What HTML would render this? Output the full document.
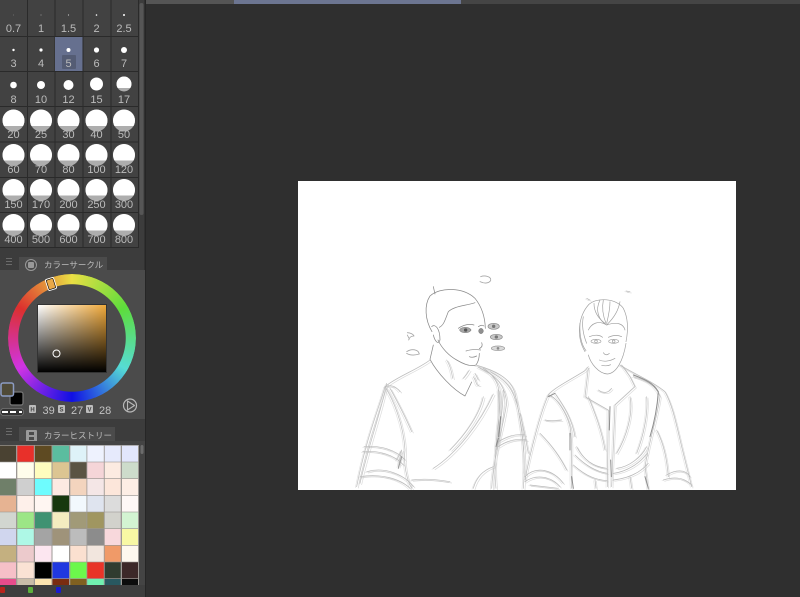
<!DOCTYPE html>
<html lang="ja">
<head>
<meta charset="utf-8">
<title>カラーサークル</title>
<style>
html,body{margin:0;padding:0;width:800px;height:597px;overflow:hidden;background:#2f2f2f}
#all{position:absolute;left:0;top:0;width:800px;height:597px;filter:blur(.35px)}
svg{position:absolute;left:0;top:0}
text{font-family:"Liberation Sans","Noto Sans CJK JP",sans-serif}
#wheel{position:absolute;left:7.5px;top:274px;width:128px;height:128px;border-radius:50%;
background:conic-gradient(#eadf44 0deg,#5ddc3c 60deg,#56dcd4 120deg,#1010e4 180deg,#d034e4 240deg,#dc302e 300deg,#eadf44 360deg);
-webkit-mask:radial-gradient(circle,transparent 53.5px,#000 54px);mask:radial-gradient(circle,transparent 53.5px,#000 54px)}
#sv{position:absolute;left:38px;top:305px;width:68px;height:67px;
background:linear-gradient(to bottom,transparent,#000),linear-gradient(to right,#fff,#f0a93a);box-shadow:0 0 0 1px #333}
</style>
</head>
<body>
<div id="all">
<svg width="800" height="597" viewBox="0 0 800 597" xmlns="http://www.w3.org/2000/svg">
<defs>
<clipPath id="w"><rect x="-12" y="-12" width="24" height="17.5"/></clipPath>
<clipPath id="w17"><rect x="115" y="75" width="18" height="13"/></clipPath>
<g id="big"><circle r="11" fill="#adadad"/><circle r="11" fill="#fff" clip-path="url(#w)"/></g>
</defs>
<rect width="800" height="597" fill="#2f2f2f"/>
<rect x="146" y="0" width="88" height="4" fill="#555"/>
<rect x="234" y="0" width="227" height="4" fill="#6c7591"/>
<rect x="461" y="0" width="339" height="4" fill="#454545"/>
<rect x="0" y="0" width="146" height="597" fill="#3c3c3c"/>
<rect x="144.500" y="0" width="1.500" height="597" fill="#262626"/>

<!-- brush grid -->
<rect x="0" y="0" width="139" height="248" fill="#424242"/>
<g fill="#2a2a2a">
<rect x="27" y="0" width="1" height="248"/><rect x="54.500" y="0" width="1" height="248"/><rect x="82.500" y="0" width="1" height="248"/><rect x="110.500" y="0" width="1" height="248"/><rect x="138" y="0" width="1" height="248"/>
<rect x="0" y="36" width="139" height="1"/><rect x="0" y="71" width="139" height="1"/><rect x="0" y="106" width="139" height="1"/><rect x="0" y="141.500" width="139" height="1"/><rect x="0" y="177" width="139" height="1"/><rect x="0" y="212" width="139" height="1"/><rect x="0" y="247" width="139" height="1"/>
</g>
<rect x="139.500" y="3" width="4" height="212" rx="2" fill="#565656"/>
<rect x="55" y="37" width="27.500" height="34" fill="#66708f"/>
<rect x="62" y="55" width="14" height="14" rx="1" fill="#545c74"/>
<g fill="#fff">
<circle cx="13.500" cy="15" r=".4" opacity=".5"/><circle cx="41" cy="15" r=".5" opacity=".6"/><circle cx="68.500" cy="15" r=".6" opacity=".7"/><circle cx="96.500" cy="15" r=".8"/><circle cx="124" cy="15" r="1"/>
<circle cx="13.500" cy="50" r="1.200"/><circle cx="41" cy="50" r="1.600"/><circle cx="68.500" cy="50" r="2"/><circle cx="96.500" cy="50" r="2.600"/><circle cx="124" cy="50" r="3"/>
<circle cx="13.500" cy="85" r="3.300"/><circle cx="41" cy="85" r="4"/><circle cx="68.500" cy="85" r="5"/>
<circle cx="96.500" cy="84" r="6.500"/>
</g>
<circle cx="124" cy="84" r="7.500" fill="#adadad"/>
<circle cx="124" cy="84" r="7.500" fill="#fff" clip-path="url(#w17)"/>
<use href="#big" x="13.500" y="120.500"/><use href="#big" x="41" y="120.500"/><use href="#big" x="68.500" y="120.500"/><use href="#big" x="96.500" y="120.500"/><use href="#big" x="124" y="120.500"/>
<use href="#big" x="13.500" y="155"/><use href="#big" x="41" y="155"/><use href="#big" x="68.500" y="155"/><use href="#big" x="96.500" y="155"/><use href="#big" x="124" y="155"/>
<use href="#big" x="13.500" y="190"/><use href="#big" x="41" y="190"/><use href="#big" x="68.500" y="190"/><use href="#big" x="96.500" y="190"/><use href="#big" x="124" y="190"/>
<use href="#big" x="13.500" y="225"/><use href="#big" x="41" y="225"/><use href="#big" x="68.500" y="225"/><use href="#big" x="96.500" y="225"/><use href="#big" x="124" y="225"/>
<g fill="#bcbcbc" font-size="11" text-anchor="middle">
<text x="13.500" y="32">0.7</text><text x="41" y="32">1</text><text x="68.500" y="32">1.5</text><text x="96.500" y="32">2</text><text x="124" y="32">2.5</text>
<text x="13.500" y="67">3</text><text x="41" y="67">4</text><text x="68.500" y="67">5</text><text x="96.500" y="67">6</text><text x="124" y="67">7</text>
<text x="13.500" y="103">8</text><text x="41" y="103">10</text><text x="68.500" y="103">12</text><text x="96.500" y="103">15</text><text x="124" y="103">17</text>
<text x="13.500" y="138">20</text><text x="41" y="138">25</text><text x="68.500" y="138">30</text><text x="96.500" y="138">40</text><text x="124" y="138">50</text>
<text x="13.500" y="173">60</text><text x="41" y="173">70</text><text x="68.500" y="173">80</text><text x="96.500" y="173">100</text><text x="124" y="173">120</text>
<text x="13.500" y="208">150</text><text x="41" y="208">170</text><text x="68.500" y="208">200</text><text x="96.500" y="208">250</text><text x="124" y="208">300</text>
<text x="13.500" y="243">400</text><text x="41" y="243">500</text><text x="68.500" y="243">600</text><text x="96.500" y="243">700</text><text x="124" y="243">800</text>
</g>

<!-- colour circle panel -->
<rect x="0" y="270" width="145" height="149" fill="#4b4b4b"/>
<rect x="19" y="257" width="88" height="14" fill="#4b4b4b"/>
<g fill="#6a6a6a"><rect x="6" y="258" width="6" height="1"/><rect x="6" y="261" width="6" height="1"/><rect x="6" y="264" width="6" height="1"/></g>
<circle cx="31" cy="265" r="5.500" fill="none" stroke="#999" stroke-width="1"/>
<rect x="28" y="262" width="6" height="6" rx="1" fill="#999"/>
<text x="44" y="268" font-size="8.500" fill="#bcbcbc">カラーサークル</text>

<!-- history panel -->
<rect x="0" y="419" width="145" height="26" fill="#3c3c3c"/>
<rect x="19" y="427" width="96" height="18" fill="#4b4b4b"/>
<g fill="#6a6a6a"><rect x="6" y="428" width="6" height="1"/><rect x="6" y="431" width="6" height="1"/><rect x="6" y="434" width="6" height="1"/></g>
<rect x="26" y="430" width="11" height="12" rx="1" fill="#9a9a9a"/>
<g fill="#4b4b4b"><rect x="29" y="432" width="5" height="3"/><rect x="29" y="437" width="5" height="3"/></g>
<text x="44" y="438.500" font-size="8.500" fill="#bcbcbc">カラーヒストリー</text>
<rect x="0" y="441" width="145" height="4.500" fill="#444"/>
<rect x="0" y="445" width="139" height="140" fill="#9c9894"/>
<rect x="139" y="441" width="6" height="144" fill="#444"/>
<rect x="140.500" y="445" width="3" height="9" rx="1.500" fill="#6c6c6c"/>

<g>
<rect x="0" y="445.700" width="16" height="16" fill="#4a4232"/><rect x="17.300" y="445.700" width="16.500" height="16" fill="#e8302a"/><rect x="35" y="445.700" width="16.500" height="16" fill="#5e4a22"/><rect x="52.500" y="445.700" width="16.500" height="16" fill="#5bbd9f"/><rect x="70.300" y="445.700" width="16.200" height="16" fill="#def2f8"/><rect x="87.300" y="445.700" width="16.500" height="16" fill="#eef2fe"/><rect x="104.700" y="445.700" width="16" height="16" fill="#e6eafc"/><rect x="122" y="445.700" width="16" height="16" fill="#e2e6fc"/>
<rect x="0" y="462.300" width="16" height="16" fill="#ffffff"/><rect x="17.300" y="462.300" width="16.500" height="16" fill="#fffdeb"/><rect x="35" y="462.300" width="16.500" height="16" fill="#fefdbe"/><rect x="52.500" y="462.300" width="16.500" height="16" fill="#dcc592"/><rect x="70.300" y="462.300" width="16.200" height="16" fill="#5a5443"/><rect x="87.300" y="462.300" width="16.500" height="16" fill="#f5d5d8"/><rect x="104.700" y="462.300" width="16" height="16" fill="#fcebe1"/><rect x="122" y="462.300" width="16" height="16" fill="#cddccb"/>
<rect x="0" y="479" width="16" height="16" fill="#6f7f69"/><rect x="17.300" y="479" width="16.500" height="16" fill="#cfcfcf"/><rect x="35" y="479" width="16.500" height="16" fill="#6efcfe"/><rect x="52.500" y="479" width="16.500" height="16" fill="#fdeae2"/><rect x="70.300" y="479" width="16.200" height="16" fill="#f3d4be"/><rect x="87.300" y="479" width="16.500" height="16" fill="#f4e6e6"/><rect x="104.700" y="479" width="16" height="16" fill="#fce6da"/><rect x="122" y="479" width="16" height="16" fill="#fdeee5"/>
<rect x="0" y="495.700" width="16" height="16" fill="#e6b392"/><rect x="17.300" y="495.700" width="16.500" height="16" fill="#fef0ea"/><rect x="35" y="495.700" width="16.500" height="16" fill="#fff6f2"/><rect x="52.500" y="495.700" width="16.500" height="16" fill="#17380e"/><rect x="70.300" y="495.700" width="16.200" height="16" fill="#f2f8fd"/><rect x="87.300" y="495.700" width="16.500" height="16" fill="#dfe4ef"/><rect x="104.700" y="495.700" width="16" height="16" fill="#dcdcdc"/><rect x="122" y="495.700" width="16" height="16" fill="#fef8f6"/>
<rect x="0" y="512.300" width="16" height="16" fill="#d2d6d0"/><rect x="17.300" y="512.300" width="16.500" height="16" fill="#9ce686"/><rect x="35" y="512.300" width="16.500" height="16" fill="#3f9272"/><rect x="52.500" y="512.300" width="16.500" height="16" fill="#f4ecc0"/><rect x="70.300" y="512.300" width="16.200" height="16" fill="#a19a78"/><rect x="87.300" y="512.300" width="16.500" height="16" fill="#a09660"/><rect x="104.700" y="512.300" width="16" height="16" fill="#d2d2cc"/><rect x="122" y="512.300" width="16" height="16" fill="#d3f4d2"/>
<rect x="0" y="529" width="16" height="16" fill="#d0d6ee"/><rect x="17.300" y="529" width="16.500" height="16" fill="#aef8e6"/><rect x="35" y="529" width="16.500" height="16" fill="#a4a4a4"/><rect x="52.500" y="529" width="16.500" height="16" fill="#9f937a"/><rect x="70.300" y="529" width="16.200" height="16" fill="#bcbcbc"/><rect x="87.300" y="529" width="16.500" height="16" fill="#8c8c8c"/><rect x="104.700" y="529" width="16" height="16" fill="#f8d8dc"/><rect x="122" y="529" width="16" height="16" fill="#f8f8a4"/>
<rect x="0" y="545.700" width="16" height="16" fill="#c4b080"/><rect x="17.300" y="545.700" width="16.500" height="16" fill="#eccacc"/><rect x="35" y="545.700" width="16.500" height="16" fill="#fce6f0"/><rect x="52.500" y="545.700" width="16.500" height="16" fill="#ffffff"/><rect x="70.300" y="545.700" width="16.200" height="16" fill="#fbe0d0"/><rect x="87.300" y="545.700" width="16.500" height="16" fill="#f2e6de"/><rect x="104.700" y="545.700" width="16" height="16" fill="#f09a68"/><rect x="122" y="545.700" width="16" height="16" fill="#fef8ee"/>
<rect x="0" y="562.300" width="16" height="16" fill="#f6c0c8"/><rect x="17.300" y="562.300" width="16.500" height="16" fill="#fae2d4"/><rect x="35" y="562.300" width="16.500" height="16" fill="#000000"/><rect x="52.500" y="562.300" width="16.500" height="16" fill="#2038e0"/><rect x="70.300" y="562.300" width="16.200" height="16" fill="#6cf84c"/><rect x="87.300" y="562.300" width="16.500" height="16" fill="#e83428"/><rect x="104.700" y="562.300" width="16" height="16" fill="#303c30"/><rect x="122" y="562.300" width="16" height="16" fill="#3c2828"/>
<rect x="0" y="579" width="16" height="6" fill="#e84c8c"/><rect x="17.300" y="579" width="16.500" height="6" fill="#c8bca8"/><rect x="35" y="579" width="16.500" height="6" fill="#fce4b0"/><rect x="52.500" y="579" width="16.500" height="6" fill="#7a2c10"/><rect x="70.300" y="579" width="16.200" height="6" fill="#806020"/><rect x="87.300" y="579" width="16.500" height="6" fill="#70f0b0"/><rect x="104.700" y="579" width="16" height="6" fill="#285860"/><rect x="122" y="579" width="16" height="6" fill="#0c0c0c"/>
</g>
<rect x="0" y="585" width="145" height="12" fill="#3e3e3e"/>
<rect x="0" y="587" width="5" height="6" rx="1" fill="#b8241c"/>
<rect x="28" y="587" width="5" height="6" rx="1" fill="#5cb03c"/>
<rect x="56" y="587" width="5" height="6" rx="1" fill="#1a1ad0"/>

<!-- canvas -->
<rect x="298" y="181" width="438" height="309" fill="#ffffff"/>
</svg>

<div id="wheel"></div>
<div id="sv"></div>

<svg width="800" height="597" viewBox="0 0 800 597" xmlns="http://www.w3.org/2000/svg">
<defs><clipPath id="cv"><rect x="298" y="181" width="438" height="309"/></clipPath></defs>
<!-- wheel handle + marker -->
<rect x="47.500" y="279" width="7" height="10" rx="1" transform="rotate(-18 51 284)" fill="#e8a848" stroke="#111" stroke-width=".7"/>
<rect x="46.700" y="278.200" width="8.600" height="11.600" rx="1.500" transform="rotate(-18 51 284)" fill="none" stroke="#fff" stroke-width=".9"/>
<circle cx="56.500" cy="353.500" r="3.500" fill="none" stroke="#fff" stroke-width="1"/>

<!-- colour chips -->
<rect x="10" y="392" width="13" height="13" rx="2" fill="#000" stroke="#777" stroke-width="1.200"/>
<rect x="1" y="383" width="12.500" height="13" rx="2" fill="#4f4a38" stroke="#8c9cc4" stroke-width="1.500"/>
<rect x=".5" y="408.500" width="23" height="7" rx="3" fill="#333" stroke="#777" stroke-width=".8"/>
<rect x="2" y="411" width="6" height="2" fill="#fff"/><rect x="10" y="411" width="6" height="2" fill="#fff"/><rect x="19" y="411" width="3" height="2" fill="#fff"/>

<!-- HSV -->
<g fill="#bdbdbd"><rect x="29" y="405" width="7" height="8" rx="1"/><rect x="58" y="405" width="7" height="8" rx="1"/><rect x="86" y="405" width="7" height="8" rx="1"/></g>
<g font-size="6" fill="#444" text-anchor="middle" font-weight="bold"><text x="32.500" y="411.500">H</text><text x="61.500" y="411.500">S</text><text x="89.500" y="411.500">V</text></g>
<g font-size="11" fill="#c2c2c2"><text x="42.500" y="414">39</text><text x="71" y="414">27</text><text x="99" y="414">28</text></g>
<circle cx="130" cy="405.500" r="6.500" fill="none" stroke="#b8b8b8" stroke-width="1.200"/>
<path d="M127.500 401 L134.500 405.500 L127.500 410 Z" fill="none" stroke="#b8b8b8" stroke-width="1.100" stroke-linejoin="round"/>

<g clip-path="url(#cv)">
<!-- left figure (coords = 3x zoom space) -->
<g transform="translate(350 270) scale(.33333)" fill="none" stroke-linecap="round" stroke-linejoin="round">
<g stroke="#8a8a8a" stroke-width="2.200">
<path d="M246 185 C225 150 222 105 240 78 C270 50 340 52 375 85 C395 110 405 140 406 175"/>
<path d="M250 50 L255 72"/>
<path d="M245 170 C255 160 270 175 270 210 C265 225 255 215 250 195"/>
<path d="M264 210 C275 235 298 258 320 270 C345 285 365 290 378 285 C385 275 388 262 388 250"/>
<path d="M375 98 C345 108 312 108 295 125 C285 150 282 165 268 172"/>
<path d="M250 225 L240 268 C262 310 310 360 345 378 L365 336"/>
<path d="M325 175 C340 165 355 160 372 165 M385 170 C392 165 398 165 402 168"/>
<path d="M348 243 C362 238 378 238 392 240 M358 260 C365 263 372 262 380 258"/>
<path d="M395 218 C398 225 396 232 388 236"/>
</g>
<ellipse cx="346" cy="180" rx="17" ry="8" fill="#a5a5a5" stroke="#6d6d6d" stroke-width="1.500"/>
<circle cx="347" cy="180" r="5" fill="#555"/>
<ellipse cx="393" cy="183" rx="7" ry="8" fill="#8f8f8f" stroke="#777" stroke-width="1.500"/>
<ellipse cx="431" cy="169" rx="17" ry="9" fill="#c8c8c8" stroke="#8a8a8a" stroke-width="2"/><circle cx="431" cy="169" r="5" fill="#777"/>
<ellipse cx="439" cy="201" rx="18" ry="8" fill="#c8c8c8" stroke="#8a8a8a" stroke-width="2"/><circle cx="439" cy="201" r="5" fill="#777"/>
<ellipse cx="444" cy="235" rx="20" ry="7" fill="#dadada" stroke="#999" stroke-width="2"/><circle cx="444" cy="235" r="4" fill="#8a8a8a"/>
<g stroke="#a5a5a5" stroke-width="2.500">
<path d="M392 20 C405 15 425 20 422 32 C415 42 400 40 390 35"/>
<path d="M172 188 C180 188 190 192 192 198 C183 198 178 202 176 210 M172 195 L178 207"/>
<path d="M170 245 C185 235 205 238 208 252 C195 256 180 256 170 250"/>
</g>
<g id="ll" stroke="#bbb" stroke-width="2">
<path d="M240 270 C200 300 140 320 105 350 C85 420 50 500 20 650"/>
<path d="M110 340 C95 420 60 510 30 640"/>
<path d="M105 350 C130 390 160 460 165 540 C160 580 170 630 185 655"/>
<path d="M120 355 C145 400 170 450 185 485 M140 570 L155 540 L145 590"/>
<path d="M42 530 C90 525 140 540 165 570 M38 545 C85 540 135 555 160 585"/>
<path d="M50 605 C100 590 160 610 190 650 M30 620 C90 610 150 625 180 655"/>
<path d="M378 285 C430 300 480 320 495 370 C510 440 530 540 520 655"/>
<path d="M385 292 C425 310 465 335 470 400 C460 470 430 560 425 655"/>
<path d="M400 295 C440 320 455 350 448 430 C440 500 430 590 438 655"/>
<path d="M420 305 C460 325 490 350 505 420 C515 480 525 540 522 610"/>
<path d="M445 360 C450 420 445 500 440 540 M460 360 C458 420 450 480 442 530"/>
<path d="M445 515 C470 500 495 490 525 495 M445 530 C470 512 500 505 530 510"/>
<path d="M430 372 C390 460 320 550 250 595"/>
<path d="M400 380 C390 430 350 490 300 540"/>
<path d="M185 630 C220 625 260 628 300 635 M370 655 C380 620 400 600 430 590"/>
<path d="M290 270 C300 285 305 305 308 325 M340 325 C350 315 355 305 358 300"/>
<path d="M370 320 C380 335 378 350 388 345 M375 310 L385 330"/>
<path d="M105 350 C120 345 135 345 150 365"/>
</g>
<use href="#ll" x="5" y="4" opacity=".55"/>
<use href="#ll" x="-4" y="3" opacity=".4"/>
<path d="M445 505 L438 530 M452 440 L446 500" stroke="#888" stroke-width="3"/>
<path d="M155 560 L145 595" stroke="#999" stroke-width="3"/>
</g>

<!-- right figure -->
<g transform="translate(520 280) scale(.33333)" fill="none" stroke-linecap="round" stroke-linejoin="round">
<g stroke="#a0a0a0" stroke-width="2">
<path d="M205 75 C175 110 168 170 195 215"/>
<path d="M205 75 C230 50 290 55 310 85 C325 115 325 150 318 185"/>
<path d="M205 225 C212 250 235 280 262 282 C290 280 310 240 318 190"/>
<path d="M240 60 C225 90 235 120 260 135 C285 110 295 90 300 65"/>
<path d="M205 150 C215 130 235 120 260 135 C290 125 310 130 315 150"/>
<path d="M250 60 C245 85 250 110 258 130 M270 65 C270 90 265 110 260 130 M222 70 C222 95 235 115 255 130"/>
<path d="M180 130 C178 170 185 195 198 212 M190 110 C185 135 190 165 200 190"/>
<path d="M208 170 C225 163 240 165 248 172 M265 172 C280 165 295 165 305 170"/>
<path d="M250 218 C255 226 262 226 268 220"/>
<path d="M238 240 C250 246 270 244 285 235 M245 256 C255 258 265 258 272 254"/>
<ellipse cx="228" cy="184" rx="15" ry="6"/><circle cx="228" cy="184" r="4"/>
<ellipse cx="281" cy="184" rx="15" ry="6"/><circle cx="281" cy="184" r="4"/>
</g>
<g id="rl" stroke="#b8b8b8" stroke-width="2">
<path d="M200 55 L210 60 M318 33 L330 35"/>
<path d="M205 260 L195 272 C150 300 100 325 85 345 C60 400 30 520 15 600"/>
<path d="M205 265 L195 350 L265 390 L262 620"/>
<path d="M305 255 L330 290 L345 320 L285 375 L275 620"/>
<path d="M300 255 C340 280 400 305 435 335 C460 380 470 440 490 520 L515 620"/>
<path d="M340 290 C380 300 410 320 420 350 C410 420 390 470 375 560 L385 630"/>
<path d="M85 345 C110 350 140 400 150 440 C160 500 150 560 155 625"/>
<path d="M105 340 C125 370 155 410 165 470 M170 500 C190 540 220 560 260 565 M290 565 C330 560 365 530 380 500"/>
<path d="M165 525 C200 560 230 575 262 580 M280 580 C320 575 360 550 382 520"/>
<path d="M160 555 C200 590 230 600 262 602 M280 600 C320 595 360 580 385 550"/>
<path d="M205 350 C225 400 245 450 255 510 M330 350 C340 400 320 470 290 520 M380 350 C385 400 370 470 350 520"/>
<path d="M235 330 C250 340 265 340 275 325"/>
<path d="M15 590 C50 555 100 570 130 610 M15 605 C50 580 95 590 120 620 M30 615 L115 625"/>
<path d="M440 585 C465 570 495 565 510 590 M430 600 C460 590 490 590 515 615"/>
<path d="M60 460 C90 490 120 530 140 570 M410 450 C430 490 440 530 445 590"/>
<path d="M75 420 C95 425 110 420 125 420 M0 400 C10 440 20 490 25 520"/>
<path d="M225 600 L228 625 M330 590 L335 625"/>
</g>
<use href="#rl" x="4" y="4" opacity=".5"/>
<use href="#rl" x="-4" y="2" opacity=".35"/>
<g stroke="#8e8e8e" stroke-width="3">
<path d="M340 285 C380 300 400 310 415 335 C412 380 405 420 390 470"/>
<path d="M270 380 L268 450 M272 540 L274 590"/>
<path d="M105 340 L85 350 M150 460 L150 510 M155 590 L160 625 M375 590 L385 625"/>
</g>
</g>
</g>
</svg>
</div>
</body>
</html>
